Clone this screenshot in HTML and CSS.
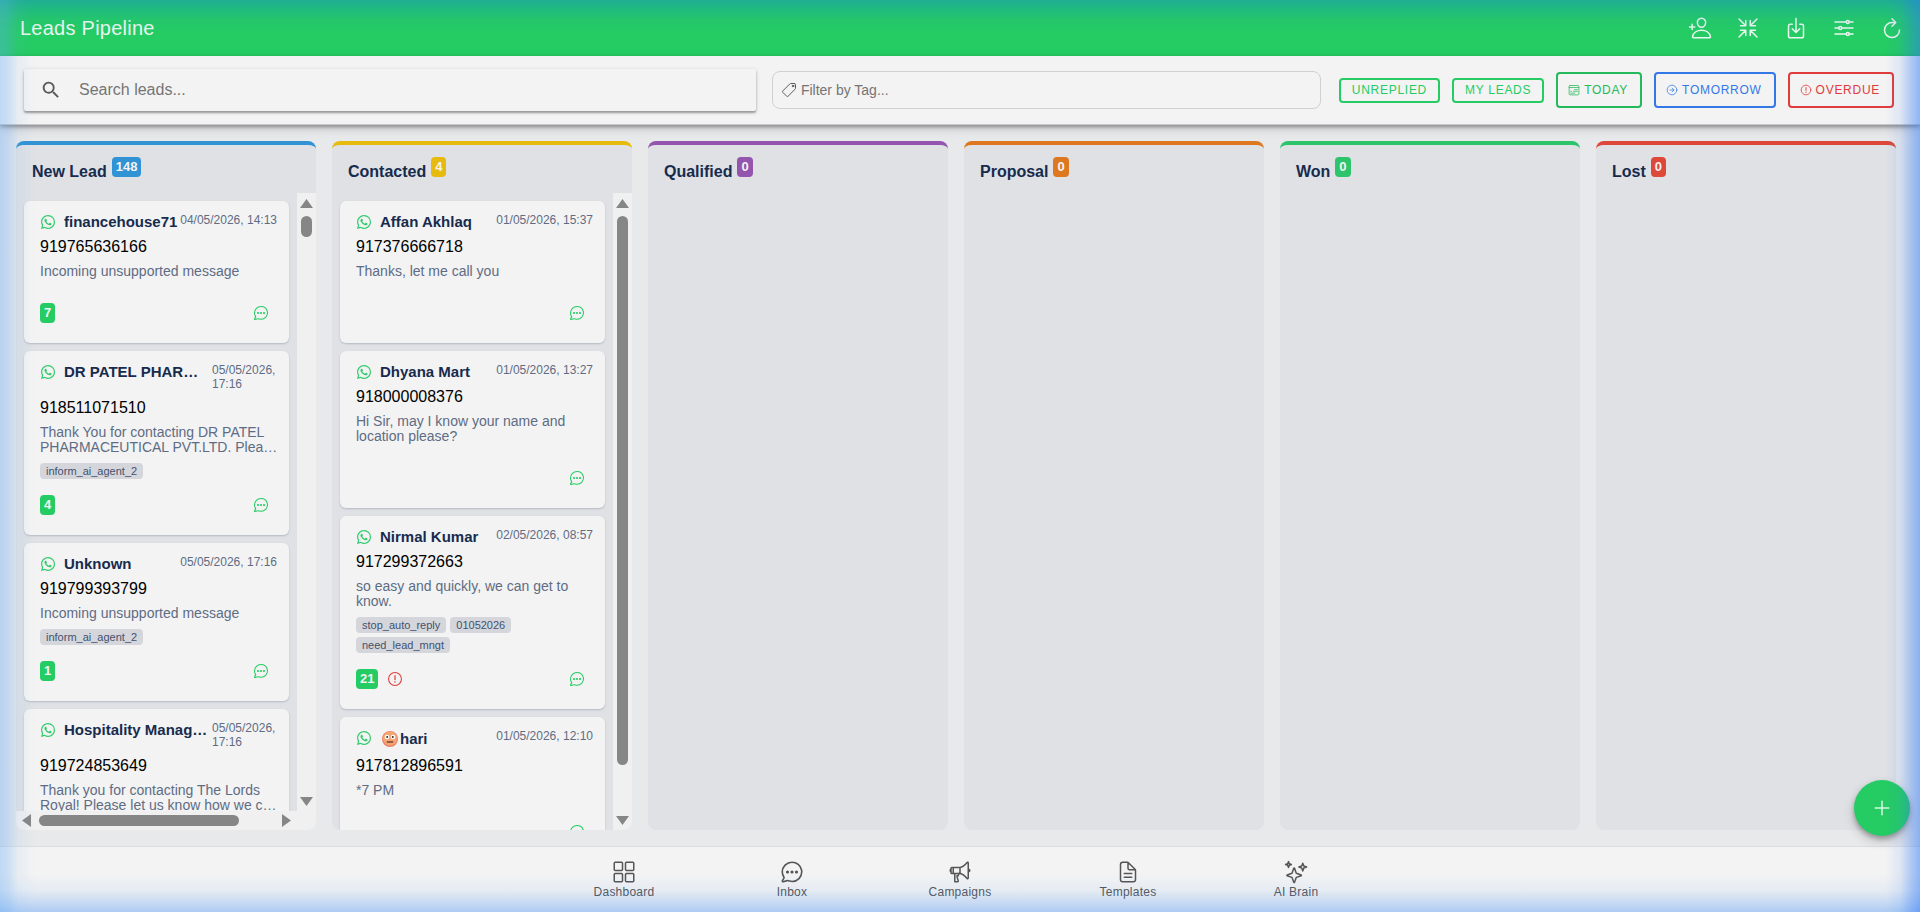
FILE: index.html
```html
<!DOCTYPE html>
<html lang="en">
<head>
    <meta charset="UTF-8">
    <meta name="viewport" content="width=device-width, initial-scale=1.0">
    <title>Leads Pipeline</title>
    <link rel="stylesheet" href="styles.css">
</head>
<body>
    <svg class="sprite" aria-hidden="true">
        <symbol id="i-whatsapp" viewBox="0 0 512 512">
            <path fill="currentColor" fill-rule="evenodd" d="M414.7 97.100A222.100 222.100 0 0 0 256.900 32C134 32 33.900 131.600 33.900 254.100a220.600 220.600 0 0 0 29.800 111L32 480l118.300-30.900a223.600 223.600 0 0 0 106.600 27c122.900 0 223-99.600 223-222.100a220.200 220.200 0 0 0-65.200-156.900zM256.900 438.700a186 186 0 0 1-94.400-25.800l-6.800-4-70.200 18.300 18.800-68.100-4.400-7a183.300 183.300 0 0 1-28.400-98c0-101.700 83.200-184.500 185.500-184.500a185 185 0 0 1 185.300 184.700c0 101.800-83.200 184.400-185.400 184.400zm101.700-138.200c-5.600-2.800-33-16.200-38.100-18.100s-8.800-2.800-12.600 2.800-14.400 18-17.600 21.700-6.500 4.200-12.100 1.400-23.500-8.600-44.800-27.500c-16.600-14.700-27.700-32.900-31-38.500s-.3-8.500 2.500-11.300c2.500-2.500 5.600-6.500 8.400-9.700s3.700-5.500 5.600-9.200.9-6.900-.5-9.700-12.500-30.100-17.200-41.200c-4.500-10.800-9.100-9.300-12.500-9.500s-6.900-.2-10.700-.2a20.500 20.500 0 0 0-14.900 6.900c-5.100 5.600-19.500 19-19.500 46.300s20 53.700 22.800 57.400 39.400 59.800 95.300 83.900a320 320 0 0 0 31.800 11.700 76.900 76.900 0 0 0 35.100 2.200c10.700-1.600 33-13.400 37.600-26.400s4.600-24.100 3.300-26.400-5.100-3.700-10.900-6.600z"/>
        </symbol>
        <symbol id="i-chat" viewBox="0 0 512 512">
            <path fill="none" stroke="currentColor" stroke-width="34" stroke-linecap="round" stroke-linejoin="round" d="M87 380c1-5-2-11-5-16a198 198 0 0 1-34-111C48 140 141 48 256 48c101 0 185 71 204 165a199 199 0 0 1 4 39c0 113-89 206-204 206-18 0-43-5-56-8s-27-9-30-10a31 31 0 0 0-23 0L70 463a16 16 0 0 1-21-19z"/>
            <g fill="currentColor" stroke="none"><circle cx="160" cy="256" r="34"/><circle cx="256" cy="256" r="34"/><circle cx="352" cy="256" r="34"/></g>
        </symbol>
        <symbol id="i-alert" viewBox="0 0 512 512">
            <circle cx="256" cy="256" r="206" fill="none" stroke="currentColor" stroke-width="34"/>
            <path fill="none" stroke="currentColor" stroke-width="40" stroke-linecap="round" d="M256 150v124"/>
            <circle cx="256" cy="350" r="26" fill="currentColor" stroke="none"/>
        </symbol>
    </svg>

    <header class="header">
        <h1>Leads Pipeline</h1>
        <div class="header-actions">
            <button type="button" aria-label="Add lead">
                <svg class="icon" viewBox="0 0 512 512"><path d="M376 144c-4 53-44 96-88 96s-84-43-88-96c-4-55 35-96 88-96s92 42 88 96zM288 304c-87 0-175 48-191 139-2 10 4 21 15 21h352c11 0 17-11 15-21-16-91-104-139-191-139zM88 176v112M144 232H32"/></svg>
            </button>
            <button type="button" aria-label="Collapse">
                <svg class="icon" viewBox="0 0 512 512"><path d="M304 416V304h112M314 314l134 134M416 208H304V96M314 198L448 64M96 304h112v112M198 314L64 448M208 96v112H96M198 198L64 64"/></svg>
            </button>
            <button type="button" aria-label="Download">
                <svg class="icon" viewBox="0 0 512 512"><path d="M336 176h40a40 40 0 0 1 40 40v208a40 40 0 0 1-40 40H136a40 40 0 0 1-40-40V216a40 40 0 0 1 40-40h40M176 272l80 80 80-80M256 48v288"/></svg>
            </button>
            <button type="button" aria-label="Options">
                <svg class="icon" viewBox="0 0 512 512"><path d="M368 128h80M64 128h240M368 384h80M64 384h240M208 256h240M64 256h80"/><circle cx="336" cy="128" r="32"/><circle cx="176" cy="256" r="32"/><circle cx="336" cy="384" r="32"/></svg>
            </button>
            <button type="button" aria-label="Refresh">
                <svg class="icon" viewBox="0 0 512 512"><path d="M320 146s24-6-64-6a160 160 0 1 0 160 160M256 58l80 80-80 80"/></svg>
            </button>
        </div>
    </header>

    <div class="toolbar">
        <label class="search">
            <svg viewBox="0 0 24 24" aria-hidden="true"><path d="M15.500 14h-.8l-.3-.3A6.500 6.500 0 1 0 13.700 14.400l.3.300v.8l5 5 1.500-1.500-5-5zm-6 0a4.500 4.500 0 1 1 0-9 4.500 4.500 0 0 1 0 9z"/></svg>
            <input type="search" placeholder="Search leads..." aria-label="Search leads">
        </label>
        <label class="tag-filter">
            <svg class="icon" viewBox="0 0 512 512" aria-hidden="true"><path d="M435 48H312a46 46 0 0 0-30 12L57 286a31 31 0 0 0 0 44L182 455a31 31 0 0 0 44 0L452 230a46 46 0 0 0 12-31V77a29 29 0 0 0-29-29z"/><circle cx="384" cy="128" r="26" fill="currentColor"/></svg>
            <input type="text" placeholder="Filter by Tag..." aria-label="Filter by tag">
        </label>
        <div class="filters">
            <button type="button" class="filter">UNREPLIED</button>
            <button type="button" class="filter">MY LEADS</button>
            <button type="button" class="filter tall today">
                <svg class="icon" viewBox="0 0 512 512" aria-hidden="true"><rect x="48" y="64" width="416" height="400" rx="40"/><path d="M48 150h416M280 240h120M230 310h170M110 310h40M110 390h180"/></svg>TODAY</button>
            <button type="button" class="filter tall tomorrow">
                <svg class="icon" viewBox="0 0 512 512" aria-hidden="true"><circle cx="256" cy="256" r="206"/><path d="M262 176l80 80-80 80M330 256H170"/></svg>TOMORROW</button>
            <button type="button" class="filter tall overdue">
                <svg class="icon" aria-hidden="true"><use href="#i-alert"/></svg>OVERDUE</button>
        </div>
    </div>

    <main class="board">
        <section class="column new">
            <h2>New Lead <span class="badge">148</span></h2>
            <div class="scroller both">
                <div class="list">
                    <article class="card">
                        <div class="card-head"><svg class="wa"><use href="#i-whatsapp"/></svg><h3>financehouse71</h3><time>04/05/2026, 14:13</time></div>
                        <p class="phone">919765636166</p>
                        <p class="message">Incoming unsupported message</p>
                        <div class="card-foot"><span class="unread">7</span><button type="button" class="chat" aria-label="Open chat"><svg><use href="#i-chat"/></svg></button></div>
                    </article>
                    <article class="card">
                        <div class="card-head"><svg class="wa"><use href="#i-whatsapp"/></svg><h3>DR PATEL PHAR…</h3><time class="wrap">05/05/2026, 17:16</time></div>
                        <p class="phone">918511071510</p>
                        <p class="message">Thank You for contacting DR PATEL PHARMACEUTICAL PVT.LTD. Plea…</p>
                        <div class="tags"><span>inform_ai_agent_2</span></div>
                        <div class="card-foot"><span class="unread">4</span><button type="button" class="chat" aria-label="Open chat"><svg><use href="#i-chat"/></svg></button></div>
                    </article>
                    <article class="card">
                        <div class="card-head"><svg class="wa"><use href="#i-whatsapp"/></svg><h3>Unknown</h3><time>05/05/2026, 17:16</time></div>
                        <p class="phone">919799393799</p>
                        <p class="message">Incoming unsupported message</p>
                        <div class="tags"><span>inform_ai_agent_2</span></div>
                        <div class="card-foot"><span class="unread">1</span><button type="button" class="chat" aria-label="Open chat"><svg><use href="#i-chat"/></svg></button></div>
                    </article>
                    <article class="card">
                        <div class="card-head"><svg class="wa"><use href="#i-whatsapp"/></svg><h3>Hospitality Manag…</h3><time class="wrap">05/05/2026, 17:16</time></div>
                        <p class="phone">919724853649</p>
                        <p class="message">Thank you for contacting The Lords Royal! Please let us know how we c…</p>
                    </article>
                </div>
                <div class="bar-y"><i class="arrow up"></i><i class="thumb short"></i><i class="arrow down"></i></div>
                <div class="bar-x"><i class="arrow left"></i><i class="thumb"></i><i class="arrow right"></i></div>
            </div>
        </section>

        <section class="column contacted">
            <h2>Contacted <span class="badge">4</span></h2>
            <div class="scroller">
                <div class="list">
                    <article class="card">
                        <div class="card-head"><svg class="wa"><use href="#i-whatsapp"/></svg><h3>Affan Akhlaq</h3><time>01/05/2026, 15:37</time></div>
                        <p class="phone">917376666718</p>
                        <p class="message">Thanks, let me call you</p>
                        <div class="card-foot"><button type="button" class="chat" aria-label="Open chat"><svg><use href="#i-chat"/></svg></button></div>
                    </article>
                    <article class="card">
                        <div class="card-head"><svg class="wa"><use href="#i-whatsapp"/></svg><h3>Dhyana Mart</h3><time>01/05/2026, 13:27</time></div>
                        <p class="phone">918000008376</p>
                        <p class="message">Hi Sir, may I know your name and location please?</p>
                        <div class="card-foot"><button type="button" class="chat" aria-label="Open chat"><svg><use href="#i-chat"/></svg></button></div>
                    </article>
                    <article class="card">
                        <div class="card-head"><svg class="wa"><use href="#i-whatsapp"/></svg><h3>Nirmal Kumar</h3><time>02/05/2026, 08:57</time></div>
                        <p class="phone">917299372663</p>
                        <p class="message">so easy and quickly, we can get to know.</p>
                        <div class="tags"><span>stop_auto_reply</span><span>01052026</span><span>need_lead_mngt</span></div>
                        <div class="card-foot"><span class="unread">21</span><svg class="late"><use href="#i-alert"/></svg><button type="button" class="chat" aria-label="Open chat"><svg><use href="#i-chat"/></svg></button></div>
                    </article>
                    <article class="card">
                        <div class="card-head"><svg class="wa"><use href="#i-whatsapp"/></svg>
                            <h3 class="with-face"><svg class="face" viewBox="0 0 20 20" aria-hidden="true"><circle cx="10" cy="10" r="8" fill="#ec8265"/><circle cx="10" cy="9.500" r="7" fill="#f4a573"/><circle cx="7" cy="8" r="2.300" fill="#fff"/><circle cx="13" cy="8" r="2.300" fill="#fff"/><circle cx="7.200" cy="8" r="1" fill="#40251c"/><circle cx="12.800" cy="8" r="1" fill="#40251c"/><path d="M6.800 13h6.400" stroke="#6b3426" stroke-width="1.300"/></svg>hari</h3>
                            <time>01/05/2026, 12:10</time></div>
                        <p class="phone">917812896591</p>
                        <p class="message">*7 PM</p>
                        <div class="card-foot"><button type="button" class="chat" aria-label="Open chat"><svg><use href="#i-chat"/></svg></button></div>
                    </article>
                </div>
                <div class="bar-y"><i class="arrow up"></i><i class="thumb long"></i><i class="arrow down"></i></div>
            </div>
        </section>

        <section class="column qualified"><h2>Qualified <span class="badge">0</span></h2></section>
        <section class="column proposal"><h2>Proposal <span class="badge">0</span></h2></section>
        <section class="column won"><h2>Won <span class="badge">0</span></h2></section>
        <section class="column lost"><h2>Lost <span class="badge">0</span></h2></section>
    </main>

    <nav class="tabs">
        <a href="#dashboard">
            <svg class="icon" viewBox="0 0 512 512"><rect x="48" y="48" width="176" height="176" rx="20"/><rect x="288" y="48" width="176" height="176" rx="20"/><rect x="48" y="288" width="176" height="176" rx="20"/><rect x="288" y="288" width="176" height="176" rx="20"/></svg>
            Dashboard</a>
        <a href="#inbox"><svg class="icon"><use href="#i-chat"/></svg>Inbox</a>
        <a href="#campaigns">
            <svg class="icon" viewBox="0 0 512 512"><path d="M408 52S321 160 240 160H80a16 16 0 0 0-16 16v96a16 16 0 0 0 16 16h160c81 0 168 108 168 108 6 8 24 3 24-10V62c0-12-17-19-24-10zM64 256s-16-6-16-32 16-32 16-32M448 246s16-4 16-22-16-22-16-22M256 160v128M112 160v128M144 288v168a8 8 0 0 0 8 8h53a16 16 0 0 0 15-21c-8-27-28-57-28-107h16a16 16 0 0 0 16-16v-16a16 16 0 0 0-16-16h-16"/></svg>
            Campaigns</a>
        <a href="#templates">
            <svg class="icon" viewBox="0 0 512 512"><path d="M416 221v195a48 48 0 0 1-48 48H144a48 48 0 0 1-48-48V96a48 48 0 0 1 48-48h99a32 32 0 0 1 22 9l142 142a32 32 0 0 1 9 22zM256 56v120a32 32 0 0 0 32 32h120M176 288h160M176 368h160"/></svg>
            Templates</a>
        <a href="#ai-brain">
            <svg class="icon" viewBox="0 0 512 512"><path d="M260 279l-35-101a9 9 0 0 0-17 0l-35 101a9 9 0 0 1-5 5L67 319a9 9 0 0 0 0 17l101 35a9 9 0 0 1 5 5l35 101a9 9 0 0 0 17 0l35-101a9 9 0 0 1 5-5l101-35a9 9 0 0 0 0-17l-101-35a9 9 0 0 1-5-5zM113 79L96 34 79 79 34 96l45 17 17 45 17-45 45-17zM422 128L400 68l-22 60-60 22 60 22 22 60 22-60 60-22z"/></svg>
            AI Brain</a>
    </nav>

    <button type="button" class="fab" aria-label="New lead"><svg class="icon" viewBox="0 0 512 512"><path d="M256 112v288M400 256H112"/></svg></button>
    <div class="glow"></div>
</body>
</html>
```

FILE: styles.css
```css
* {
    box-sizing: border-box;
}
body {
    margin: 0;
    height: 100vh;
    display: flex;
    flex-direction: column;
    overflow: hidden;
    font-family: Arial, "Liberation Sans", sans-serif;
    background-color: #e8e9eb;
    color: #000;
}
h1, h2, h3, p {
    margin: 0;
}
button {
    font-family: inherit;
    background: none;
    border: none;
    padding: 0;
    cursor: pointer;
}
.sprite {
    display: none;
}
.icon {
    fill: none;
    stroke: currentColor;
    stroke-width: 32;
    stroke-linecap: round;
    stroke-linejoin: round;
    flex: none;
}

/* header */
.header {
    height: 56px;
    flex: none;
    display: flex;
    align-items: center;
    justify-content: space-between;
    padding: 0 16px 0 20px;
    background-color: #25cc63;
    color: #ebf7ef;
}
.header h1 {
    font-size: 20px;
    font-weight: 500;
    letter-spacing: 0.0125em;
}
.header-actions {
    display: flex;
    gap: 24px;
}
.header-actions button {
    color: inherit;
    height: 24px;
}
.header-actions svg {
    width: 24px;
    height: 24px;
    display: block;
}

/* search and filters */
.toolbar {
    position: relative;
    flex: none;
    height: 69px;
    display: grid;
    grid-template-columns: 4fr 3fr auto;
    gap: 16px;
    align-items: center;
    padding: 0 26px 0 24px;
    background-color: #f3f3f3;
    border-bottom: 1px solid #c9c9ca;
    box-shadow: 0 2px 4px rgba(0, 0, 0, 0.35), 0 4px 10px rgba(0, 0, 0, 0.12);
}
.search {
    height: 42px;
    display: flex;
    align-items: center;
    gap: 17px;
    padding: 0 16px;
    border-radius: 2px;
    box-shadow: 0 2px 2px rgba(0, 0, 0, 0.3), 0 1px 4px rgba(0, 0, 0, 0.16);
}
.search svg {
    width: 22px;
    height: 22px;
    fill: #595959;
}
.toolbar input {
    flex: 1;
    min-width: 0;
    border: none;
    outline: none;
    padding: 0;
    background: none;
    font: 16px Arial, "Liberation Sans", sans-serif;
}
.toolbar input::placeholder {
    color: #757575;
}
.tag-filter {
    height: 38px;
    display: flex;
    align-items: center;
    gap: 4px;
    padding: 0 8px;
    border: 1px solid #d0d0d0;
    border-radius: 8px;
    color: #5c5c5c;
}
.tag-filter svg {
    width: 16px;
    height: 16px;
}
.toolbar .tag-filter input {
    font-size: 14px;
}
.filters {
    display: flex;
    align-items: center;
    gap: 12px;
    margin-left: 2px;
}
.filter {
    height: 25px;
    display: flex;
    align-items: center;
    gap: 4px;
    padding: 0 11px;
    border: 2px solid #25cc63;
    border-radius: 4px;
    color: #25cc63;
    font-size: 12px;
    letter-spacing: 0.06em;
}
.filter.tall {
    height: 36px;
    padding: 0 12px 0 10px;
}
.filter svg {
    width: 12px;
    height: 12px;
}
.filter.today {
    color: #24b95a;
    border-color: #24b95a;
}
.filter.tomorrow {
    color: #3478e8;
    border-color: #3478e8;
}
.filter.overdue {
    color: #e03c3c;
    border-color: #e03c3c;
}

/* board */
.board {
    flex: 1;
    min-height: 0;
    display: flex;
    gap: 16px;
    padding: 16px;
    overflow: hidden;
}
.column {
    flex: 0 0 300px;
    display: flex;
    flex-direction: column;
    overflow: hidden;
    border-top: 4px solid;
    border-radius: 8px;
    background-color: #dfe1e5;
}
.column h2 {
    flex: none;
    height: 48px;
    padding: 15px 16px 0;
    font-size: 16px;
    line-height: 24px;
    color: #172b4d;
    display: flex;
    gap: 5px;
    align-items: flex-start;
}
.badge, .unread {
    height: 20px;
    padding: 0 4px;
    border-radius: 4px;
    color: #f3f3f3;
    font-size: 13px;
    font-weight: bold;
    line-height: 19px;
}
.column .badge {
    margin-top: -3px;
}
.new { border-color: #3193d4; }
.new .badge { background-color: #3193d4; }
.contacted { border-color: #e6bb0e; }
.contacted .badge { background-color: #e6bb0e; }
.qualified { border-color: #9455ae; }
.qualified .badge { background-color: #9455ae; }
.proposal { border-color: #dd7821; }
.proposal .badge { background-color: #dd7821; }
.won { border-color: #2dc46c; }
.won .badge { background-color: #2dc46c; }
.lost { border-color: #dd483a; }
.lost .badge { background-color: #dd483a; }

.scroller {
    flex: 1;
    min-height: 0;
    display: grid;
    grid-template-columns: 1fr 19px;
    grid-template-rows: minmax(0, 1fr);
}
.scroller.both {
    grid-template-rows: minmax(0, 1fr) 19px;
}
.list {
    padding: 8px;
    overflow: hidden;
}

/* scroll bars */
.bar-y, .bar-x {
    display: flex;
    align-items: center;
    background-color: #f0f0f0;
}
.bar-y {
    flex-direction: column;
    padding: 6px 0 5px;
}
.bar-x {
    grid-column: 1 / 3;
    padding: 0 25px 0 6px;
}
.thumb {
    width: 200px;
    height: 11px;
    margin: 0 8px;
    border-radius: 6px;
    background-color: #868686;
}
.bar-y .thumb {
    width: 11px;
    margin: 8px 0;
}
.bar-y .short {
    height: 21px;
}
.bar-y .long {
    height: 549px;
}
.arrow {
    width: 13px;
    height: 9px;
    background-color: #868686;
    clip-path: polygon(50% 0, 100% 100%, 0 100%);
}
.arrow.down {
    margin-top: auto;
    clip-path: polygon(0 0, 100% 0, 50% 100%);
}
.arrow.left, .arrow.right {
    width: 9px;
    height: 13px;
    clip-path: polygon(100% 0, 100% 100%, 0 50%);
}
.arrow.right {
    margin-left: auto;
    clip-path: polygon(0 0, 100% 50%, 0 100%);
}

/* cards */
.card {
    margin-bottom: 8px;
    padding: 12px 12px 20px 16px;
    border-radius: 6px;
    background-color: #f3f3f3;
    box-shadow: 0 1px 2px rgba(9, 30, 66, 0.2);
}
.card-head {
    display: flex;
    align-items: flex-start;
}
.wa {
    width: 16px;
    height: 16px;
    margin: 1px 8px 0 0;
    flex: none;
    color: #2ecb6b;
}
.card h3 {
    font-size: 15px;
    line-height: 17px;
    color: #172b4d;
    white-space: nowrap;
}
.card h3.with-face {
    display: flex;
    align-items: center;
    line-height: 20px;
}
.face {
    width: 20px;
    height: 20px;
}
.card time {
    margin-left: auto;
    font-size: 12px;
    line-height: 14px;
    color: #5e6c84;
    white-space: nowrap;
}
.card time.wrap {
    width: 65px;
    white-space: normal;
}
.phone {
    margin-top: 7px;
    font-size: 16px;
    line-height: 20px;
}
.message {
    margin: 7px -4px 8px 0;
    font-size: 14px;
    line-height: 15px;
    color: #5e6c84;
}
.tags {
    display: flex;
    flex-wrap: wrap;
    gap: 4px;
}
.tags span {
    padding: 0 6px;
    border-radius: 4px;
    background-color: #d5d6dc;
    color: #42526e;
    font-size: 11px;
    line-height: 16px;
}
.card-foot {
    display: flex;
    align-items: center;
    gap: 9px;
    height: 20px;
    margin-top: 16px;
    padding-right: 8px;
}
.message + .card-foot {
    margin-top: 24px;
}
.unread {
    background-color: #25cc63;
}
.late {
    width: 16px;
    height: 16px;
    color: #e03c3c;
}
.chat {
    height: 16px;
    margin-left: auto;
    color: #25cc63;
}
.chat svg {
    width: 16px;
    height: 16px;
    display: block;
}

/* bottom tabs */
.tabs {
    flex: none;
    height: 66px;
    display: flex;
    justify-content: center;
    background-color: #f3f3f3;
    border-top: 1px solid #dedee0;
}
.tabs a {
    width: 168px;
    display: flex;
    flex-direction: column;
    align-items: center;
    gap: 1px;
    padding-top: 13px;
    color: #555;
    font-size: 12px;
    line-height: 14px;
    letter-spacing: 0.02em;
    text-decoration: none;
}
.tabs svg {
    width: 24px;
    height: 24px;
}

.fab {
    position: fixed;
    right: 10px;
    bottom: 76px;
    width: 56px;
    height: 56px;
    border-radius: 50%;
    background-color: #25cc63;
    color: #dcf5e5;
    box-shadow: 0 3px 5px rgba(0, 0, 0, 0.25), 0 5px 12px rgba(0, 0, 0, 0.2);
}
.fab svg {
    width: 24px;
    height: 24px;
    display: block;
    margin: auto;
}
/* blue light around the window edge */
.glow {
    position: fixed;
    inset: 0;
    pointer-events: none;
    background:
        linear-gradient(to right, rgba(100, 170, 245, 0.36), rgba(100, 170, 245, 0.28) 8px, rgba(100, 170, 245, 0.08) 18px, transparent 34px),
        linear-gradient(to left, rgba(45, 120, 245, 0.5), rgba(45, 120, 245, 0.36) 8px, rgba(45, 120, 245, 0.1) 20px, transparent 34px),
        linear-gradient(to top, rgba(70, 145, 245, 0.4), rgba(70, 145, 245, 0.24) 10px, rgba(70, 145, 245, 0.07) 22px, transparent 38px),
        linear-gradient(to bottom, rgba(20, 125, 225, 0.38), rgba(20, 125, 225, 0.24) 8px, rgba(20, 125, 225, 0.07) 20px, transparent 34px);
}
```
